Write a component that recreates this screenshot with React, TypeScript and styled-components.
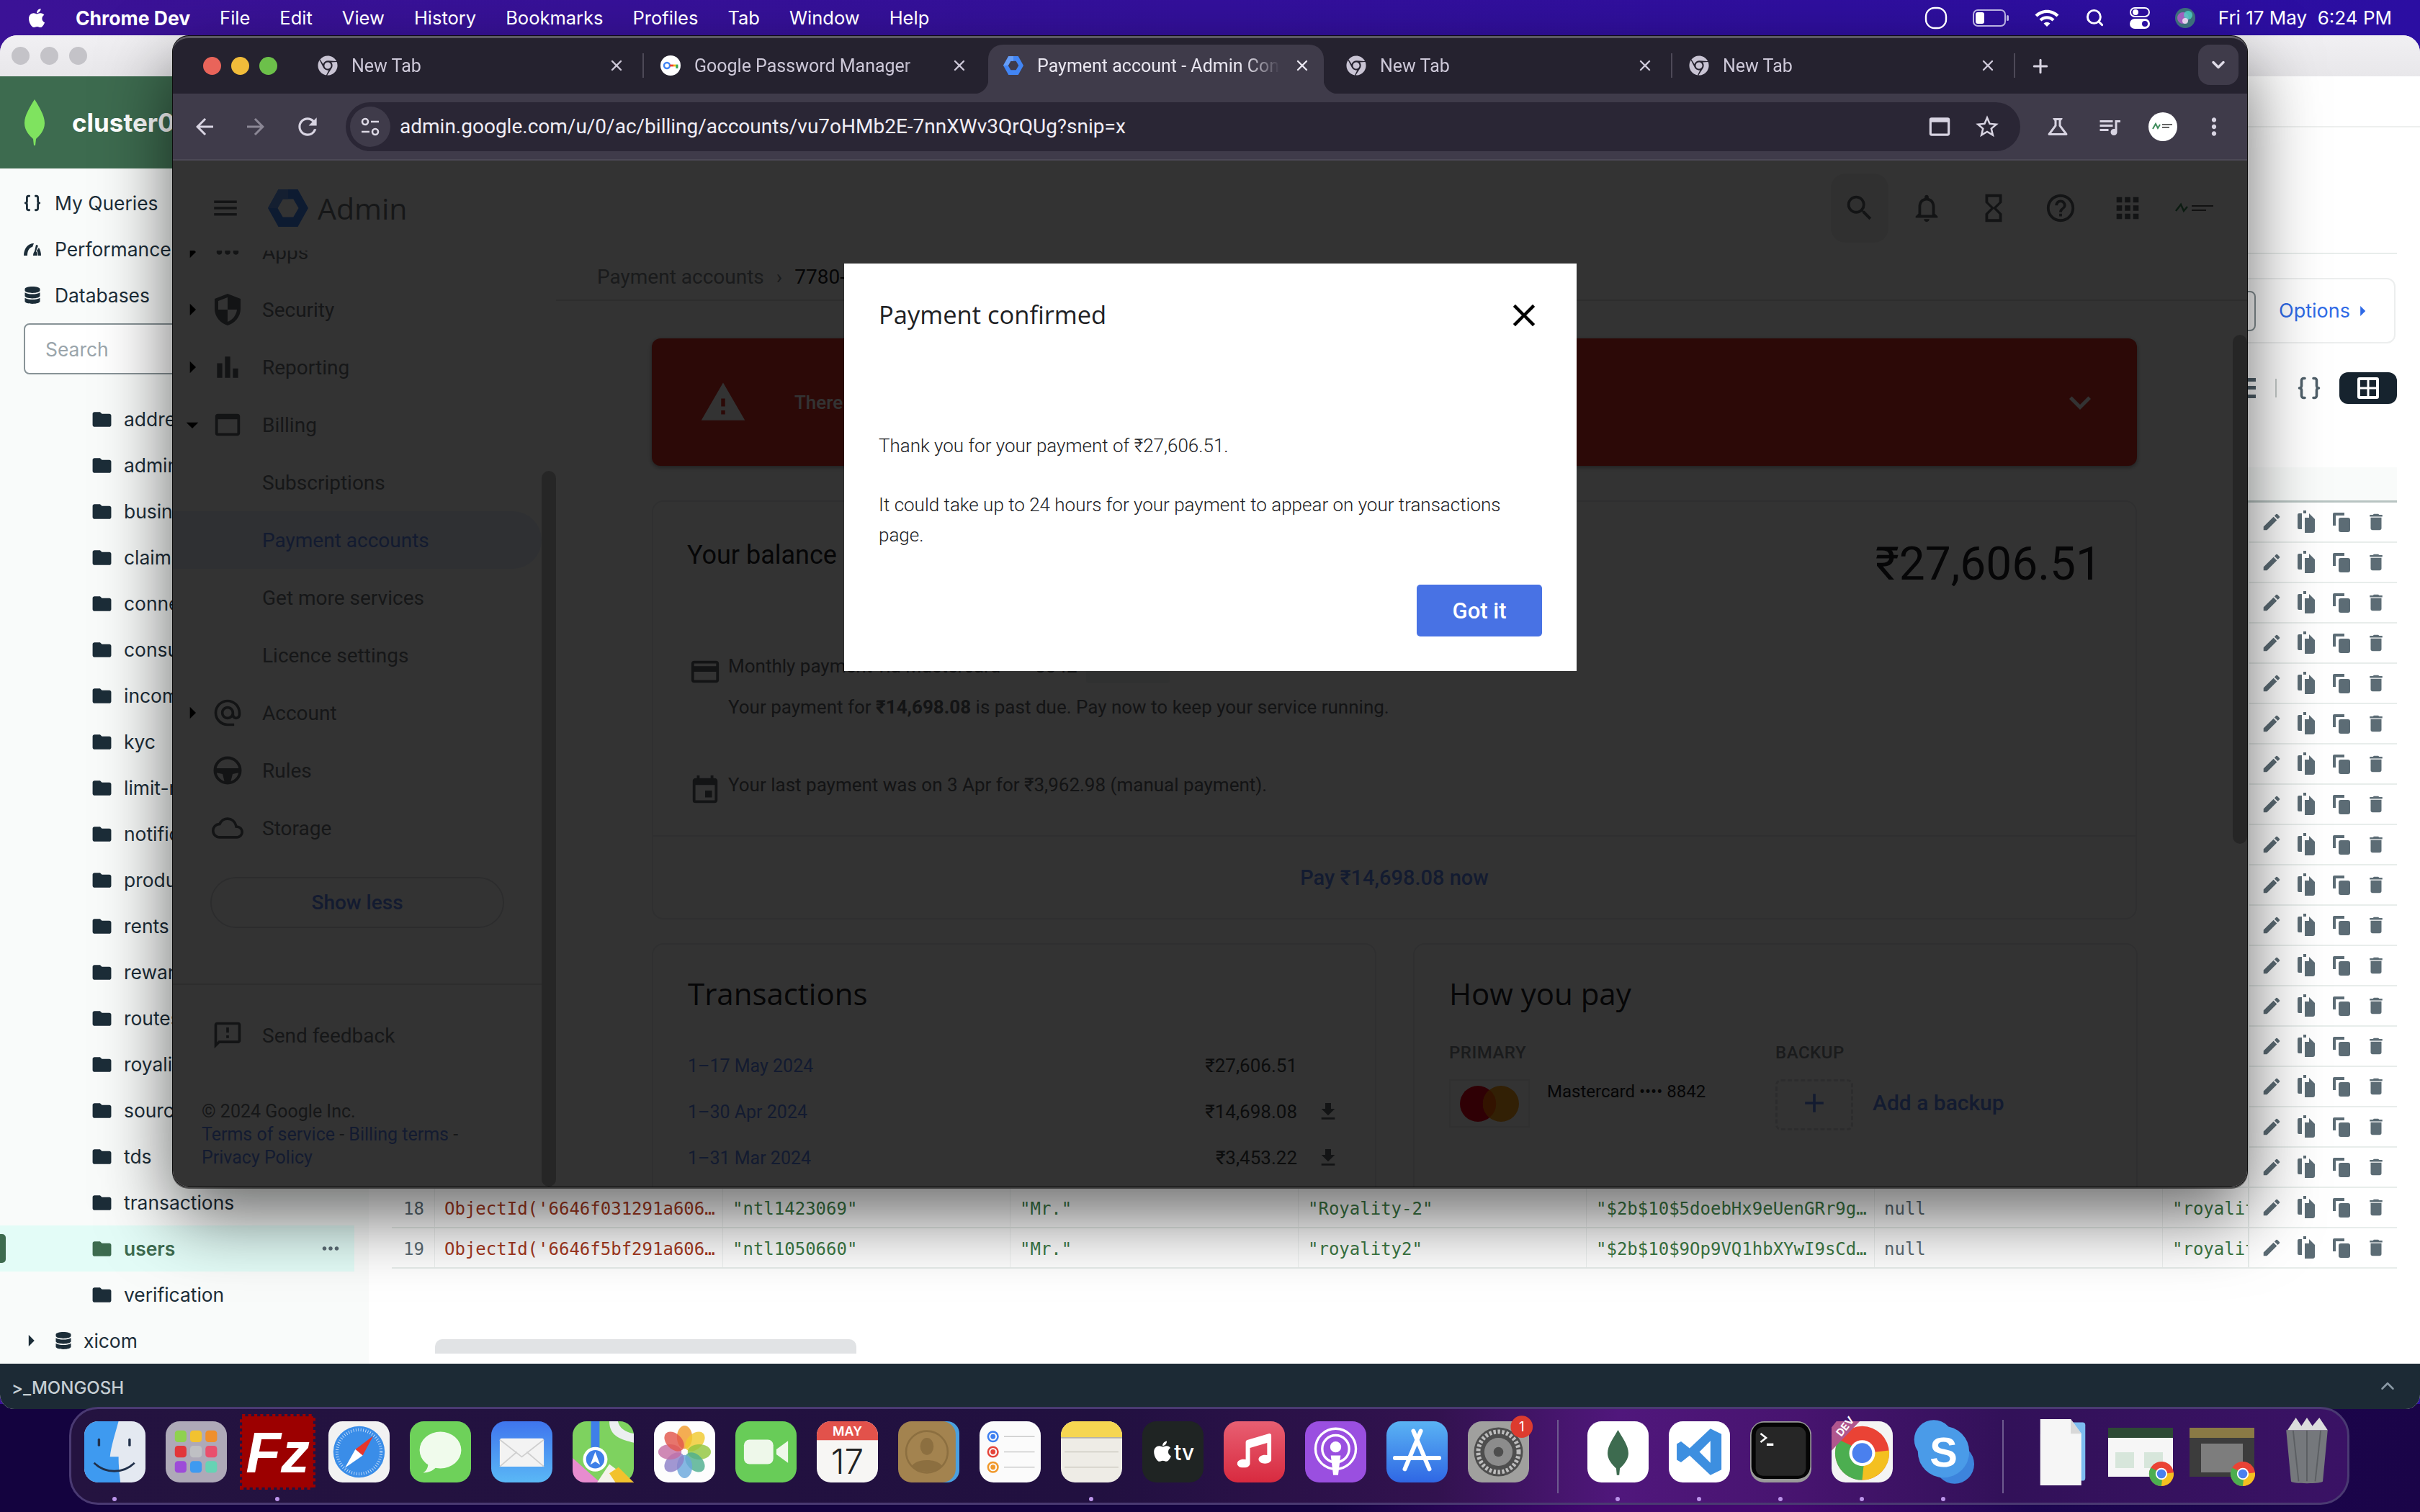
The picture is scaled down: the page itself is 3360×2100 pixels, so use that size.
import React from 'react';
import styled, { createGlobalStyle } from 'styled-components';
import { Braces, Search, ChevronDown, Plus, X, ChevronUp } from 'lucide-react';
import { FaApple, FaChrome, FaDatabase, FaMusic } from 'react-icons/fa';
import {
  MdAdd, MdAlternateEmail, MdApps, MdArrowBack, MdArrowDropDown, MdArrowForward, MdBarChart, MdClose,
  MdCreditCard, MdDelete, MdEdit, MdEvent, MdFileDownload, MdFolder, MdHelpOutline, MdHourglassEmpty,
  MdMenu, MdMoreHoriz, MdMoreVert, MdNotificationsNone, MdOutlineCloud, MdOutlineFeedback, MdOutlineQueueMusic,
  MdOutlineScience, MdRefresh, MdSearch, MdStarBorder, MdWarning, MdWifi, MdArrowRight, MdExpandMore,
  MdWebAsset,
} from 'react-icons/md';

const GlobalStyle = createGlobalStyle`
  html, body { margin: 0; padding: 0; background: #14033f; }
  * { box-sizing: border-box; }
`;

const Desktop = styled.div`
  position: relative;
  width: 3360px;
  height: 2100px;
  overflow: hidden;
  font-family: Inter, "Liberation Sans", sans-serif;
  background: linear-gradient(90deg, #3b1296 0%, #2b0ea2 100%);
`;

const Wallpaper = styled.div`
  position: absolute;
  left: 0;
  right: 0;
  top: 1950px;
  bottom: 0;
  background: linear-gradient(90deg, #14033f 0%, #14033f 55%, #42086f 66%, #44086f 74%, #1d0650 84%, #1a0448 100%);
`;

/* ---------- menu bar ---------- */

const MenuBar = styled.div`
  position: relative;
  z-index: 5;
  height: 49px;
  display: flex;
  align-items: center;
  padding: 0 39px 0 36px;
  color: #fff;
  font-size: 25.5px;
`;

const AppleMark = styled.span`
  display: flex;
  margin-right: 39px;
`;

const MenuList = styled.div`
  display: flex;
  gap: 41px;
`;

const MenuItem = styled.span<{ $bold?: boolean }>`
  font-weight: ${(p) => (p.$bold ? 700 : 400)};
  font-size: ${(p) => (p.$bold ? '26.5px' : 'inherit')};
`;

const StatusArea = styled.div`
  margin-left: auto;
  display: flex;
  align-items: center;
  gap: 35px;
`;

const StatusTime = styled.span`
  margin-left: -3px;
  white-space: pre;
  font-size: 26px;
`;

/* ---------- compass (window behind) ---------- */

const CompassWindow = styled.div`
  position: relative;
  height: 1908px;
  display: flex;
  flex-direction: column;
  border-radius: 24px 24px 20px 20px;
  overflow: hidden;
  background: #fff;
`;

const CompassTitle = styled.div`
  height: 57px;
  flex: none;
  display: flex;
  align-items: center;
  gap: 15px;
  padding-left: 16px;
  background: linear-gradient(#f1f0f3, #e8e7ea);
`;

const GreyLight = styled.span`
  width: 25px;
  height: 25px;
  border-radius: 50%;
  background: #c4c3c8;
`;

const CompassBody = styled.div`
  flex: 1;
  display: flex;
  min-height: 0;
`;

const CompassSidebar = styled.div`
  width: 512px;
  flex: none;
  background: #f9fbfa;
  color: #1c2d38;
  font-size: 26.4px;
`;

const ClusterHeader = styled.div`
  height: 128px;
  display: flex;
  align-items: center;
  gap: 36px;
  padding-left: 32px;
  background: #3d6b4f;
  color: #fff;
  font-size: 35px;
  font-weight: 700;
`;

const SideNav = styled.div`
  padding-top: 16px;
`;

const SideLink = styled.div`
  height: 64px;
  display: flex;
  align-items: center;
  gap: 18px;
  padding-left: 32px;
`;

const SideIcon = styled.span`
  width: 26px;
  display: flex;
  justify-content: center;
`;

const SearchBox = styled.div`
  margin: 7px 0 30px 33px;
  width: 400px;
  height: 71px;
  display: flex;
  align-items: center;
  padding-left: 28px;
  border: 2px solid #889397;
  border-radius: 8px;
  background: #fff;
  color: #9aa5ab;
`;

const CollectionRow = styled.div<{ $active?: boolean }>`
  position: relative;
  width: 492px;
  height: 64px;
  display: flex;
  align-items: center;
  gap: 15px;
  padding-left: 126px;
  color: ${(p) => (p.$active ? '#3d6b4f' : '#1c2d38')};
  font-weight: ${(p) => (p.$active ? 600 : 400)};
  background: ${(p) => (p.$active ? '#e3fcf7' : 'transparent')};
`;

const ActiveMarker = styled.span`
  position: absolute;
  left: 0;
  top: 12px;
  width: 8px;
  height: 40px;
  border-radius: 0 5px 5px 0;
  background: #3d6b4f;
`;

const RowDots = styled.span`
  margin-left: auto;
  margin-right: 16px;
  display: flex;
  color: #5c6c75;
`;

const DatabaseRow = styled.div`
  height: 64px;
  display: flex;
  align-items: center;
  padding-left: 32px;
  gap: 16px;
`;

const CompassMain = styled.div`
  flex: 1;
  min-width: 0;
  display: flex;
  flex-direction: column;
  padding-right: 32px;
  background: #fff;
`;

const MainTabs = styled.div`
  height: 71px;
  flex: none;
  margin-right: -32px;
  border-bottom: 2px solid #edefee;
`;

const MainHeading = styled.div`
  height: 176px;
  flex: none;
  border-bottom: 2px solid #e8edeb;
`;

const QueryBar = styled.div`
  margin: 33px 2px 0 32px;
  height: 91px;
  flex: none;
  display: flex;
  align-items: center;
  justify-content: flex-end;
  padding-right: 27px;
  border: 2px solid #eceeee;
  border-radius: 12px;
`;

const QueryInput = styled.div`
  flex: 1;
  height: 56px;
  margin-right: 32px;
  border: 2px solid #889397;
  border-radius: 8px;
`;

const OptionsLink = styled.span`
  display: flex;
  align-items: center;
  color: #2f6ae6;
  font-size: 27px;
`;

const ViewBar = styled.div`
  margin-top: 40px;
  height: 44px;
  flex: none;
  display: flex;
  justify-content: flex-end;
  align-items: center;
`;

const ViewDivider = styled.span`
  width: 2px;
  height: 26px;
  margin: 0 27px;
  background: #c6cccb;
`;

const ViewButton = styled.span<{ $active?: boolean }>`
  width: ${(p) => (p.$active ? '80px' : 'auto')};
  height: 44px;
  margin-left: ${(p) => (p.$active ? '24px' : '0')};
  display: flex;
  align-items: center;
  justify-content: center;
  border-radius: 12px;
  color: ${(p) => (p.$active ? '#fff' : '#4f5f69')};
  background: ${(p) => (p.$active ? '#16232e' : 'transparent')};
`;

const TableBlock = styled.div`
  margin: 88px 0 0 32px;
  flex: none;
`;

const TableHead = styled.div`
  height: 49px;
  background: #f9fbfa;
  border-bottom: 3px solid #b8c4c2;
`;

const gridColumns = '59px 400px 399px 400px 400px 400px 400px 119px 207px';

const TableRow = styled.div`
  height: 56px;
  display: grid;
  grid-template-columns: ${gridColumns};
  border-bottom: 2px solid #e8edeb;
  font-family: "DejaVu Sans Mono", monospace;
  font-size: 24px;
`;

const Cell = styled.div<{ $tone?: string }>`
  padding: 3px 0 0 13px;
  display: flex;
  align-items: center;
  white-space: nowrap;
  overflow: hidden;
  border-left: 1px solid #eef1f0;
  color: ${(p) => p.$tone || '#5c6c75'};
`;

const NumberCell = styled.div`
  padding: 3px 0 0 16px;
  display: flex;
  align-items: center;
  color: #5c6c75;
`;

const ActionCell = styled.div`
  display: flex;
  align-items: center;
  gap: 19px;
  padding-left: 16px;
  color: #5c6c75;
  border-left: 2px solid #e8edeb;
  background: #fff;
`;

const HorizontalBar = styled.div`
  margin: auto 0 14px 92px;
  width: 585px;
  height: 20px;
  flex: none;
  border-radius: 10px 10px 0 0;
  background: #e1e3e5;
`;

const ShellBar = styled.div`
  height: 63px;
  flex: none;
  display: flex;
  align-items: center;
  justify-content: space-between;
  padding: 0 30px 2px 16px;
  background: #1c2a35;
  color: #c5ced3;
  font-size: 24px;
  font-weight: 500;
`;

const ShellLabel = styled.span`
  margin-top: 5px;
`;

/* ---------- chrome window (floats above compass) ---------- */

const ChromeWindow = styled.div`
  position: absolute;
  left: 240px;
  top: 50px;
  width: 2880px;
  height: 1598px;
  z-index: 2;
  display: flex;
  flex-direction: column;
  border-radius: 22px;
  background: #25222f;
  box-shadow: 0 40px 100px rgba(0, 0, 0, 0.6), 0 0 0 1px #111, 0 2px 0 1px #777;
`;

const ChromeClip = styled.div`
  position: relative;
  flex: 1;
  display: flex;
  flex-direction: column;
  min-height: 0;
  border-radius: 22px;
  overflow: hidden;
  border-top: 3px solid #5c5a63;
`;

const TabStrip = styled.div`
  height: 77px;
  flex: none;
  display: flex;
  align-items: flex-end;
  padding-left: 42px;
`;

const Lights = styled.div`
  align-self: center;
  display: flex;
  gap: 14px;
  margin-right: 35px;
`;

const Light = styled.span<{ $c: string }>`
  width: 25px;
  height: 25px;
  border-radius: 50%;
  background: ${(p) => p.$c};
`;

const Tab = styled.div<{ $active?: boolean; $divider?: boolean }>`
  position: relative;
  width: 466px;
  height: 68px;
  margin-right: 10px;
  display: flex;
  align-items: center;
  padding: 0 18px 10px 21px;
  border-radius: 20px 20px 0 0;
  color: ${(p) => (p.$active ? '#e9e6f0' : '#cdc8d8')};
  background: ${(p) => (p.$active ? '#3f3b4a' : 'transparent')};
  font-family: Roboto, sans-serif;
  font-size: 25px;

  &::before {
    content: '';
    display: ${(p) => (p.$active ? 'block' : 'none')};
    position: absolute;
    left: -20px;
    bottom: 0;
    width: 20px;
    height: 20px;
    background: radial-gradient(circle at 0 0, transparent 20px, #3f3b4a 21px);
  }

  &::after {
    content: '';
    display: ${(p) => (p.$divider || p.$active ? 'block' : 'none')};
    position: absolute;
    right: ${(p) => (p.$active ? '-20px' : '-8px')};
    top: ${(p) => (p.$active ? 'auto' : '12px')};
    bottom: ${(p) => (p.$active ? '0' : 'auto')};
    width: ${(p) => (p.$active ? '20px' : '2px')};
    height: ${(p) => (p.$active ? '20px' : '34px')};
    background: ${(p) => (p.$active ? 'radial-gradient(circle at 100% 0, transparent 20px, #3f3b4a 21px)' : '#4d4957')};
  }
`;

const TabFavicon = styled.span`
  width: 28px;
  height: 28px;
  flex: none;
  display: flex;
  margin-right: 19px;
`;

const TabLabel = styled.span`
  flex: 1;
  white-space: nowrap;
  overflow: hidden;
  -webkit-mask-image: linear-gradient(90deg, #000 84%, transparent 98%);
`;

const NewTabButton = styled.span`
  align-self: center;
  margin: 0 0 0 18px;
  display: flex;
  color: #d8d4e2;
`;

const TabMenuButton = styled.span`
  margin: 0 12px 12px auto;
  width: 56px;
  height: 56px;
  display: flex;
  align-items: center;
  justify-content: center;
  border-radius: 16px;
  background: #3f3b4a;
  color: #e0dce8;
`;

const Toolbar = styled.div`
  height: 93px;
  flex: none;
  display: flex;
  align-items: center;
  padding: 0 27px 0 26px;
  background: #3f3b4a;
  border-bottom: 2px solid #4c4956;
`;

const NavIcon = styled.span<{ $dim?: boolean }>`
  display: flex;
  margin-right: 35px;
  color: ${(p) => (p.$dim ? '#8b8795' : '#d8d4e2')};
`;

const Omnibox = styled.div`
  width: 2340px;
  height: 68px;
  margin-left: -1px;
  display: flex;
  align-items: center;
  padding: 0 27px 0 6px;
  border-radius: 34px;
  background: #2a2635;
  color: #f0edf5;
  font-family: Roboto, sans-serif;
  font-size: 28px;
`;

const SiteInfo = styled.span`
  width: 56px;
  height: 56px;
  flex: none;
  margin-right: 13px;
  display: flex;
  align-items: center;
  justify-content: center;
  border-radius: 50%;
  background: #3f3b4a;
  color: #dcd8e4;
`;

const OmniActions = styled.span`
  margin-left: auto;
  display: flex;
  align-items: center;
  gap: 28px;
  color: #d8d4e2;
`;

const ToolActions = styled.div`
  margin-left: 34px;
  display: flex;
  align-items: center;
  gap: 36px;
  color: #d8d4e2;
`;

const AvatarDot = styled.span`
  width: 40px;
  height: 40px;
  margin-right: -4px;
  display: flex;
  align-items: center;
  justify-content: center;
  border-radius: 50%;
  background: #fff;
`;

const PageArea = styled.div`
  position: relative;
  flex: 1;
  min-height: 0;
  display: flex;
  flex-direction: column;
  background: #fff;
  overflow: hidden;
  color: #202124;
  font-family: Roboto, sans-serif;
`;

const AdminHeader = styled.div`
  height: 125px;
  flex: none;
  display: flex;
  align-items: center;
  padding: 6px 33px 0 52px;
  color: #5f6368;
`;

const HeaderIcon = styled.span<{ $lit?: boolean }>`
  width: 80px;
  height: 96px;
  margin-left: 13px;
  display: flex;
  align-items: center;
  justify-content: center;
  border-radius: 20px;
  color: #5f6368;
  background: ${(p) => (p.$lit ? '#f1f1f1' : 'transparent')};
`;

const LogoSlot = styled.span`
  display: flex;
  margin-left: 38px;
`;

const AdminWordmark = styled.span`
  margin-left: 13px;
  font-family: "Open Sans", Roboto, sans-serif;
  font-size: 41px;
  color: #6f7378;
`;

const HeaderRight = styled.div`
  margin-left: auto;
  display: flex;
  align-items: center;
`;

const PageBody = styled.div`
  flex: 1;
  min-height: 0;
  display: flex;
`;

const AdminNav = styled.div`
  width: 512px;
  flex: none;
  overflow: hidden;
`;

const NavList = styled.div`
  margin-top: -38px;
`;

const NavRow = styled.div<{ $active?: boolean }>`
  height: 80px;
  display: flex;
  align-items: center;
  padding-left: 20px;
  border-radius: 0 40px 40px 0;
  font-size: 28px;
  color: ${(p) => (p.$active ? '#5f86f0' : '#6f7378')};
  background: ${(p) => (p.$active ? '#e8f0fe' : 'transparent')};
`;

const NavArrow = styled.span`
  width: 14px;
  margin-right: 14px;
  display: flex;
  justify-content: center;
  color: #000;
`;

const NavGlyph = styled.span`
  width: 56px;
  margin-right: 20px;
  display: flex;
  justify-content: center;
  color: #5f6368;
`;

const ShowLess = styled.div`
  margin: 28px 0 0 52px;
  width: 408px;
  height: 71px;
  display: flex;
  align-items: center;
  justify-content: center;
  border: 2px solid #dadce0;
  border-radius: 36px;
  color: #5f86f0;
  font-size: 28px;
  font-weight: 500;
`;

const NavRule = styled.div`
  margin-top: 77px;
  height: 2px;
  background: #e0e0e0;
`;

const FeedbackRow = styled.div`
  height: 140px;
  display: flex;
  align-items: center;
  padding: 0 0 0 48px;
  color: #6f7378;
  font-size: 28px;
`;

const LegalText = styled.div`
  margin: 20px 0 0 40px;
  line-height: 32px;
  font-size: 25px;
  color: #6f7378;
`;

const LinkText = styled.span`
  color: #5f86f0;
`;

const ScrollThumb = styled.div<{ $top: number; $height?: number }>`
  width: 20px;
  flex: none;
  margin-top: ${(p) => p.$top}px;
  height: ${(p) => (p.$height ? `${p.$height}px` : 'auto')};
  border-radius: 10px;
  background: #bdbdbd;
`;

const MainColumn = styled.div`
  flex: 1;
  min-width: 0;
  display: flex;
  flex-direction: column;
`;

const Breadcrumb = styled.div`
  height: 70px;
  flex: none;
  display: flex;
  align-items: flex-start;
  gap: 17px;
  padding: 20px 0 0 57px;
  border-bottom: 2px solid #e0e0e0;
  font-size: 28px;
  color: #80868b;
`;

const CrumbCurrent = styled.span`
  color: #202124;
`;

const ContentRow = styled.div`
  flex: 1;
  min-height: 0;
  display: flex;
`;

const Content = styled.div`
  flex: 1;
  min-width: 0;
  padding: 52px 133px 0;
`;

const AlertBar = styled.div`
  height: 177px;
  display: flex;
  align-items: center;
  padding: 0 49px 0 66px;
  border-radius: 12px;
  background: #d93025;
  color: #fff;
  font-size: 26px;
  box-shadow: 0 2px 6px rgba(0, 0, 0, 0.4);
`;

const AlertText = styled.span`
  margin-left: 66px;
  font-weight: 500;
  color: #fff;
`;

const AlertChevron = styled.span`
  margin-left: auto;
  display: flex;
  color: #fff;
`;

const Card = styled.div`
  border: 2px solid #e8eaed;
  border-radius: 16px;
`;

const BalanceCard = styled(Card)`
  margin-top: 48px;
  height: 582px;
  display: flex;
  flex-direction: column;
`;

const BalanceTop = styled.div`
  height: 213px;
  flex: none;
  display: flex;
  justify-content: space-between;
  padding: 53px 47px 0 47px;
  font-size: 36px;
`;

const BalanceAmount = styled.span`
  font-size: 64px;
  line-height: 92px;
  margin-top: -12px;
`;

const InfoRow = styled.div<{ $gap?: number }>`
  display: flex;
  align-items: flex-start;
  margin-top: ${(p) => p.$gap || 0}px;
  padding-left: 56px;
  font-size: 26px;
`;

const InfoIcon = styled.span`
  width: 48px;
  margin-left: -8px;
  margin-right: 8px;
  flex: none;
  display: flex;
  justify-content: center;
  color: #5f6368;
`;

const InfoLines = styled.div`
  display: flex;
  flex-direction: column;
  gap: 25px;
  line-height: 30px;
  color: #5f6368;
`;

const Chip = styled.span`
  display: inline-block;
  width: 116px;
  height: 44px;
  margin: -7px 0 -7px 12px;
  vertical-align: middle;
  border-radius: 4px;
  background: #f1f3f4;
`;

const PayStrip = styled.div`
  margin-top: auto;
  height: 115px;
  flex: none;
  display: flex;
  align-items: center;
  justify-content: center;
  border-top: 2px solid #e8eaed;
  font-size: 29px;
  font-weight: 500;
  color: #5f86f0;
`;

const CardsRow = styled.div`
  margin-top: 33px;
  display: grid;
  grid-template-columns: 1006px 1006px;
  gap: 51px;
`;

const LowerCard = styled(Card)`
  height: 500px;
  padding: 42px 48px 0;
`;

const CardTitle = styled.div`
  font-family: "Open Sans", Roboto, sans-serif;
  font-size: 42px;
  line-height: 52px;
  color: #202124;
`;

const TxnList = styled.div`
  margin-top: 42px;
`;

const TxnRow = styled.div`
  height: 64px;
  display: flex;
  align-items: center;
  font-size: 25px;
`;

const TxnAmount = styled.span`
  margin-left: auto;
  font-size: 26px;
  color: #3c4043;
`;

const TxnDownload = styled.span`
  width: 32px;
  margin: 0 1px 0 27px;
  display: flex;
  justify-content: center;
  color: #5f6368;
`;

const PayGrid = styled.div`
  margin-top: 41px;
  display: grid;
  grid-template-columns: 453px 1fr;
`;

const PayLabel = styled.div`
  font-size: 24px;
  font-weight: 500;
  letter-spacing: 0.5px;
  line-height: 30px;
  color: #80868b;
`;

const PayMethod = styled.div`
  margin-top: 22px;
  display: flex;
  align-items: flex-start;
  font-size: 24px;
`;

const CardLogo = styled.span`
  width: 112px;
  height: 67px;
  flex: none;
  display: flex;
  align-items: center;
  justify-content: center;
  border: 2px solid #eeeeee;
  margin-right: 24px;
`;

const MethodText = styled.span`
  margin-top: 3px;
`;

const DashedBox = styled.span`
  width: 108px;
  height: 71px;
  flex: none;
  display: flex;
  align-items: center;
  justify-content: center;
  padding-bottom: 5px;
  border: 3px dashed #dadce0;
  border-radius: 8px;
  margin-right: 27px;
  color: #5f86f0;
`;

const AddBackup = styled.span`
  align-self: center;
  margin-bottom: 6px;
  font-size: 30px;
  font-weight: 500;
  color: #5f86f0;
`;

const Scrim = styled.div`
  position: absolute;
  inset: 0;
  background: rgba(0, 0, 0, 0.8);
`;

const Modal = styled.div`
  position: absolute;
  left: 932px;
  top: 143px;
  width: 1017px;
  height: 566px;
  padding: 0 48px 0 48px;
  display: flex;
  flex-direction: column;
  background: #fff;
`;

const ModalHeader = styled.div`
  height: 144px;
  flex: none;
  display: flex;
  align-items: center;
  justify-content: space-between;
`;

const ModalTitle = styled.div`
  margin-top: -3px;
  font-family: "Open Sans", Roboto, sans-serif;
  font-size: 34.5px;
  color: #202124;
`;

const ModalClose = styled.span`
  display: flex;
  margin-right: -1px;
  color: #000;
`;

const ModalText = styled.p`
  margin: 0;
  font-size: 26px;
  line-height: 42px;
  font-weight: 300;
  color: #202124;
`;

const ModalBody = styled.div`
  margin-top: 88px;
  display: flex;
  flex-direction: column;
  gap: 40px;
`;

const ModalFooter = styled.div`
  margin-top: 48px;
  display: flex;
  justify-content: flex-end;
`;

const PrimaryButton = styled.button`
  width: 174px;
  height: 72px;
  border: 0;
  border-radius: 5px;
  background: #4872e4;
  color: #fff;
  font-family: Roboto, sans-serif;
  font-size: 31px;
  font-weight: 500;
`;

/* ---------- dock ---------- */

const Dock = styled.div`
  position: absolute;
  left: 96px;
  top: 1954px;
  width: 3166px;
  height: 136px;
  z-index: 3;
  display: flex;
  padding: 17px 0 0 3.5px;
  border: 3px solid #4a3a72;
  border-radius: 40px;
  background: linear-gradient(90deg, #241340 0%, #211040 45%, #32124f 60%, #50177c 68%, #47146f 76%, #321159 85%, #3a1265 100%);
`;

const DockSlot = styled.div`
  width: 113px;
  flex: none;
  display: flex;
  flex-direction: column;
  align-items: center;
`;

const DockArt = styled.div`
  width: 85px;
  height: 85px;
  display: flex;
  align-items: center;
  justify-content: center;
`;

const RunDot = styled.span<{ $on?: boolean }>`
  width: 6px;
  height: 6px;
  margin-top: 20px;
  border-radius: 50%;
  background: ${(p) => (p.$on ? '#bb94ea' : 'transparent')};
`;

const DockGap = styled.div`
  width: 53px;
  flex: none;
  display: flex;
  justify-content: center;
  height: 102px;
  margin-top: -2px;

  &::before {
    content: '';
    width: 2px;
    background: #6d5a8e;
  }
`;

/* ---------- small drawings ---------- */

const Leaf = ({ size = 64, fill = '#7fe35f' }: { size?: number; fill?: string }) => (
  <svg width={size * 0.5} height={size} viewBox="0 0 32 64">
    <path d="M16 0C22 10 30 22 30 33c0 11-8 18-12 22l-1 9h-2l-1-9C10 51 2 44 2 33 2 22 10 10 16 0z" fill={fill} />
  </svg>
);

const Gauge = () => (
  <svg width="26" height="20" viewBox="0 0 26 20">
    <path d="M1 19C1 9 7 2 15 2l-2 5C8 8 6 13 6 19zM18 4l3 1-3 8c2 2 2 4 2 6h-6c0-3 1-5 2-6z" fill="#1c2d38" />
    <path d="M22 8c2 3 3 7 3 11h-4c0-3-1-5-2-7z" fill="#1c2d38" />
  </svg>
);

const HexLogo = ({ size = 54 }: { size?: number }) => (
  <svg width={size} height={size} viewBox="0 0 54 54">
    <path fillRule="evenodd" d="M14 2h26l14 25-14 25H14L0 27zM20 15l-7 12 7 12h14l7-12-7-12z" fill="#4285f4" />
    <path d="M0 27L14 2h13v13h-7l-7 12z" fill="#669df6" />
  </svg>
);

const KeyIcon = () => (
  <svg width="28" height="28" viewBox="0 0 28 28">
    <circle cx="14" cy="14" r="14" fill="#fff" />
    <circle cx="9" cy="14" r="4" fill="none" stroke="#4285f4" strokeWidth="2.4" />
    <rect x="13" y="12.6" width="5" height="2.8" fill="#ea4335" />
    <rect x="18" y="12.6" width="3.4" height="2.8" fill="#fbbc04" />
    <rect x="21.4" y="12.6" width="3" height="2.8" fill="#34a853" />
    <rect x="21.4" y="15" width="3" height="3" fill="#34a853" />
  </svg>
);

const SiteTune = () => (
  <svg width="30" height="30" viewBox="0 0 30 30" fill="none" stroke="currentColor" strokeWidth="2.6">
    <circle cx="8" cy="8" r="4" />
    <path d="M16 8h11M3 22h11" />
    <circle cx="22" cy="22" r="4" />
  </svg>
);

const CopyDoc = () => (
  <svg width="30" height="32" viewBox="0 0 30 32" fill="currentColor">
    <path d="M10 0h4v4h-4zM2 6a2 2 0 012-2h4v22H4a2 2 0 01-2-2z" />
    <path d="M12 10h6V4l8 8v16a3 3 0 01-3 3H12z" />
  </svg>
);

const CloneDoc = () => (
  <svg width="28" height="30" viewBox="0 0 28 30" fill="currentColor">
    <path d="M2 4a2 2 0 012-2h14v4H6v14H2z" />
    <rect x="10" y="9" width="16" height="20" rx="3" />
  </svg>
);

const ListGlyph = () => (
  <svg width="40" height="30" viewBox="0 0 40 30" fill="currentColor">
    <rect x="0" y="1" width="40" height="5" />
    <rect x="0" y="12" width="40" height="5" />
    <rect x="0" y="24" width="40" height="5" />
  </svg>
);

const GridGlyph = () => (
  <svg width="30" height="30" viewBox="0 0 30 30">
    <rect width="30" height="30" rx="3" fill="#fff" />
    <rect x="4" y="4" width="9.5" height="9.5" fill="#16232e" />
    <rect x="16.5" y="4" width="9.5" height="9.5" fill="#16232e" />
    <rect x="4" y="16.5" width="9.5" height="9.5" fill="#16232e" />
    <rect x="16.5" y="16.5" width="9.5" height="9.5" fill="#16232e" />
  </svg>
);

const ShieldIcon = () => (
  <svg width="40" height="46" viewBox="0 0 40 46">
    <path d="M20 1L2 8v14c0 11 8 20 18 23 10-3 18-12 18-23V8z" fill="#5f6368" />
    <path d="M20 6v17H7V11zM20 23h13c-1 8-6 14-13 17z" fill="#fff" />
  </svg>
);

const RulesIcon = () => (
  <svg width="40" height="40" viewBox="0 0 40 40">
    <circle cx="20" cy="20" r="17.5" fill="none" stroke="#5f6368" strokeWidth="4" />
    <path d="M3 17h34v6l-10 2-3 12h-8l-3-12-10-2z" fill="#5f6368" />
  </svg>
);

const Squircle = ({ fill }: { fill: string }) => <rect width="100" height="100" rx="23" fill={fill} />;

const Art = ({ children, size = 85 }: { children: React.ReactNode; size?: number }) => (
  <svg width={size} height={size} viewBox="0 0 100 100" style={{ overflow: 'visible', flex: 'none' }}>
    {children}
  </svg>
);

const ChromeBall = ({ cx, cy, r }: { cx: number; cy: number; r: number }) => (
  <g>
    <circle cx={cx} cy={cy} r={r} fill="#ea4335" />
    <path d={`M${cx - r * 0.87} ${cy - r * 0.5}A${r} ${r} 0 0 0 ${cx} ${cy + r}L${cx + r * 0.4} ${cy + r * 0.1}z`} fill="#4cae50" />
    <path d={`M${cx + r} ${cy - r * 0.1}A${r} ${r} 0 0 1 ${cx} ${cy + r}L${cx + r * 0.1} ${cy}z`} fill="#f4c020" />
    <circle cx={cx} cy={cy} r={r * 0.48} fill="#fff" />
    <circle cx={cx} cy={cy} r={r * 0.37} fill="#4a80ee" />
  </g>
);

const dockIcons: Record<string, React.ReactNode> = {
  finder: (
    <Art>
      <Squircle fill="#e4e9f1" />
      <path d="M23 0h33C50 22 44 40 42 58h14c0 14 1 28 3 42H23A23 23 0 010 77V23A23 23 0 0123 0z" fill="#3e9af0" />
      <rect x="22" y="28" width="4" height="13" rx="2" fill="#20304a" />
      <rect x="72" y="28" width="4" height="13" rx="2" fill="#20304a" />
      <path d="M16 68c18 18 48 18 66 0" stroke="#20304a" strokeWidth="3.4" fill="none" />
    </Art>
  ),
  launchpad: (
    <Art>
      <Squircle fill="#aea9b8" />
      {['#8fd14f', '#f2c230', '#ef8f2d', '#e2363a', '#bfc0c4', '#e94f6d', '#9d4bd8', '#3f9af0', '#66d3b4'].map((c, i) => (
        <rect key={c} x={15 + (i % 3) * 25} y={15 + Math.floor(i / 3) * 25} width="19" height="19" rx="5" fill={c} />
      ))}
    </Art>
  ),
  filezilla: (
    <Art size={105}>
      <rect x="3" y="3" width="94" height="94" fill="#9c0000" stroke="#9c0000" strokeWidth="6" strokeDasharray="4 4" />
      <text x="50" y="77" textAnchor="middle" fontFamily="'Liberation Sans', sans-serif" fontWeight="700" fontStyle="italic" fontSize="76" fill="#fff">Fz</text>
    </Art>
  ),
  safari: (
    <Art>
      <Squircle fill="#f2f2f2" />
      <circle cx="50" cy="50" r="42" fill="#3a8de8" />
      <circle cx="50" cy="50" r="36" fill="none" stroke="#cfe3fa" strokeWidth="5" strokeDasharray="1 3" />
      <path d="M73 24L44 46l12 10z" fill="#e8352b" />
      <path d="M27 76l29-20-12-10z" fill="#fff" />
    </Art>
  ),
  messages: (
    <Art>
      <Squircle fill="#6ed15a" />
      <ellipse cx="50" cy="47" rx="34" ry="30" fill="#f0fbec" />
      <path d="M30 68c0 8-3 13-8 16 8 0 16-3 21-9z" fill="#f0fbec" />
    </Art>
  ),
  mail: (
    <Art>
      <rect width="100" height="100" rx="23" fill="url(#mailg)" />
      <defs>
        <linearGradient id="mailg" x1="0" y1="0" x2="0" y2="1">
          <stop offset="0" stopColor="#3f75ee" />
          <stop offset="1" stopColor="#5ab8f6" />
        </linearGradient>
      </defs>
      <rect x="14" y="28" width="72" height="46" rx="3" fill="#f3f3f3" />
      <path d="M14 30l36 28 36-28M14 74l28-24M86 74L58 50" fill="none" stroke="#cfcfcf" strokeWidth="2" />
    </Art>
  ),
  maps: (
    <Art>
      <Squircle fill="#7ed25f" />
      <path d="M0 60l45 40H20A20 20 0 010 80z" fill="#e78ccf" />
      <path d="M40 100l20-30 40 30z" fill="#f5f3ea" />
      <path d="M70 100l-10-15 15-10 25 25z" fill="#f2c22d" />
      <path d="M30 0h14v50H30z" fill="#3f7fe8" />
      <path d="M60 0c0 25 20 30 40 35V20C85 18 76 10 74 0z" fill="#eceff0" />
      <circle cx="37" cy="62" r="20" fill="#fff" />
      <circle cx="37" cy="62" r="15" fill="#3f7fe8" />
      <path d="M37 50l8 21-8-5-8 5z" fill="#fff" />
    </Art>
  ),
  photos: (
    <Art>
      <Squircle fill="#fdfdfd" />
      {['#f29b2c', '#f0c92e', '#93c63e', '#4fae8f', '#6aa7dc', '#8c80c8', '#c46fa5', '#e2574c'].map((c, i) => (
        <ellipse key={c} cx="50" cy="26" rx="12.5" ry="19" fill={c} opacity="0.82" transform={`rotate(${i * 45} 50 50)`} />
      ))}
    </Art>
  ),
  facetime: (
    <Art>
      <Squircle fill="#68cc58" />
      <rect x="14" y="30" width="48" height="40" rx="9" fill="#eef8ea" />
      <path d="M67 46l19-14v36L67 54z" fill="#eef8ea" />
    </Art>
  ),
  calendar: (
    <Art>
      <Squircle fill="#f7f6f4" />
      <path d="M23 0h54a23 23 0 0123 23v8H0v-8A23 23 0 0123 0z" fill="#e2524b" />
      <text x="50" y="24" textAnchor="middle" fontFamily="Inter, sans-serif" fontWeight="600" fontSize="21" fill="#fff">MAY</text>
      <text x="50" y="86" textAnchor="middle" fontFamily="Inter, sans-serif" fontWeight="300" fontSize="56" fill="#222">17</text>
    </Art>
  ),
  contacts: (
    <Art>
      <rect x="6" width="94" height="100" rx="20" fill="#4aa0e0" />
      <rect width="94" height="100" rx="22" fill="#a3834f" />
      <circle cx="47" cy="50" r="34" fill="none" stroke="#8c6f40" strokeWidth="3" />
      <ellipse cx="47" cy="41" rx="11" ry="14" fill="#8c6f40" />
      <path d="M22 74c6-14 44-14 50 0-12 11-38 11-50 0z" fill="#8c6f40" />
    </Art>
  ),
  reminders: (
    <Art>
      <Squircle fill="#fbfbfb" />
      <circle cx="22" cy="25" r="8" fill="none" stroke="#3d7ff0" strokeWidth="3" />
      <circle cx="22" cy="25" r="4" fill="#3d7ff0" />
      <circle cx="22" cy="50" r="8" fill="none" stroke="#e5443a" strokeWidth="3" />
      <circle cx="22" cy="50" r="4" fill="#e5443a" />
      <circle cx="22" cy="75" r="8" fill="none" stroke="#f0982a" strokeWidth="3" />
      <circle cx="22" cy="75" r="4" fill="#f0982a" />
      <path d="M40 25h50M40 50h50M40 75h50" stroke="#ccc" strokeWidth="2" />
    </Art>
  ),
  notes: (
    <Art>
      <Squircle fill="#eeece6" />
      <path d="M23 0h54a23 23 0 0123 23v4H0v-4A23 23 0 0123 0z" fill="#f6d651" />
      <path d="M0 27h100" stroke="#b5b2a8" strokeWidth="2" />
      <path d="M6 50h88M6 75h88" stroke="#cfccc3" strokeWidth="1.6" />
    </Art>
  ),
  tv: (
    <Art>
      <Squircle fill="#1f2423" />
      <FaApple x="14" y="30" size="38" color="#fff" />
      <text x="52" y="63" fontFamily="Inter, sans-serif" fontWeight="500" fontSize="35" fill="#fff">tv</text>
    </Art>
  ),
  music: (
    <Art>
      <rect width="100" height="100" rx="23" fill="url(#musg)" />
      <defs>
        <linearGradient id="musg" x1="0" y1="0" x2="0" y2="1">
          <stop offset="0" stopColor="#e85f72" />
          <stop offset="1" stopColor="#d82a3f" />
        </linearGradient>
      </defs>
      <FaMusic x="22" y="20" size="56" color="#fff" />
    </Art>
  ),
  podcasts: (
    <Art>
      <rect width="100" height="100" rx="23" fill="#9a4fe0" />
      <circle cx="50" cy="45" r="33" fill="none" stroke="#fff" strokeWidth="4" />
      <circle cx="50" cy="45" r="22" fill="none" stroke="#fff" strokeWidth="4" />
      <circle cx="50" cy="42" r="9" fill="#fff" />
      <path d="M42 56h16l-4 32h-8z" fill="#fff" />
    </Art>
  ),
  appstore: (
    <Art>
      <rect width="100" height="100" rx="23" fill="url(#asg)" />
      <defs>
        <linearGradient id="asg" x1="0" y1="0" x2="0" y2="1">
          <stop offset="0" stopColor="#5ab3f4" />
          <stop offset="1" stopColor="#2f67e4" />
        </linearGradient>
      </defs>
      <path d="M56 16L30 78M44 16l26 62M14 60h72" stroke="#fff" strokeWidth="7" strokeLinecap="round" />
    </Art>
  ),
  settings: (
    <Art>
      <Squircle fill="#a0a09e" />
      <circle cx="50" cy="50" r="40" fill="#4e4e4e" />
      <circle cx="50" cy="50" r="33" fill="none" stroke="#bdbdbd" strokeWidth="7" strokeDasharray="4 3" />
      <circle cx="50" cy="50" r="23" fill="#8c8c8c" />
      <circle cx="50" cy="50" r="8" fill="#4e4e4e" />
      <circle cx="88" cy="9" r="18" fill="#dd3b2f" />
      <text x="88" y="17" textAnchor="middle" fontFamily="Inter, sans-serif" fontSize="22" fill="#fff">1</text>
    </Art>
  ),
  mongo: (
    <Art>
      <Squircle fill="#fff" />
      <path d="M50 14c8 14 17 26 17 38 0 12-9 20-14 25l-1 11h-4l-1-11c-5-5-14-13-14-25 0-12 9-24 17-38z" fill="#3d6b4f" />
    </Art>
  ),
  vscode: (
    <Art>
      <Squircle fill="#fff" />
      <path d="M68 12l18 9v58l-18 9L34 56 20 67l-7-4V37l7-4 14 11zM68 32L50 50l18 18z" fill="#3d8fe0" />
    </Art>
  ),
  terminal: (
    <Art>
      <Squircle fill="#9a9a9a" />
      <rect x="2" y="2" width="96" height="92" rx="20" fill="#050505" />
      <rect x="9" y="9" width="82" height="80" rx="12" fill="#262626" />
      <path d="M17 20l9 7-9 7" stroke="#fff" strokeWidth="3" fill="none" />
      <rect x="27" y="36" width="11" height="4" fill="#fff" />
    </Art>
  ),
  chromedev: (
    <Art>
      <Squircle fill="#f4f4f4" />
      <ChromeBall cx={50} cy={52} r={44} />
      <path d="M8 0h38L0 48V10z" fill="#b0568e" />
      <text x="16" y="26" transform="rotate(-52 16 26)" fontFamily="Inter, sans-serif" fontWeight="700" fontSize="17" fill="#fff">DEV</text>
    </Art>
  ),
  skype: (
    <Art>
      <circle cx="34" cy="30" r="32" fill="#4a9be8" />
      <circle cx="68" cy="70" r="32" fill="#3d84dc" />
      <circle cx="50" cy="50" r="42" fill="#4a9be8" />
      <text x="50" y="74" textAnchor="middle" fontFamily="'Liberation Sans', sans-serif" fontWeight="700" fontSize="68" fill="#fff">S</text>
    </Art>
  ),
  file: (
    <Art size={92}>
      <rect x="22" y="5" width="62" height="88" rx="4" fill="#7dbcef" />
      <path d="M16 0h46l16 22v78H16z" fill="#f6f6f6" />
      <path d="M62 0l16 22H62z" fill="#d8d8d8" />
    </Art>
  ),
  thumbA: (
    <Art size={100}>
      <rect y="16" width="90" height="14" fill="#2d4a35" />
      <rect y="30" width="90" height="54" fill="#f6f6f6" />
      <rect x="10" y="50" width="26" height="22" fill="#d7e6db" />
      <rect x="50" y="50" width="26" height="22" fill="#d7e6db" />
      <ChromeBall cx={74} cy={80} r={17} />
    </Art>
  ),
  thumbB: (
    <Art size={100}>
      <rect y="16" width="90" height="14" fill="#8a7a45" />
      <rect y="30" width="90" height="54" fill="#3c3c3c" />
      <rect x="16" y="38" width="58" height="40" fill="#7d7d7d" />
      <ChromeBall cx={74} cy={80} r={17} />
    </Art>
  ),
  trash: (
    <Art size={96}>
      <path d="M20 18h60l-7 74c0 4-46 4-46 0z" fill="#75787c" />
      <path d="M30 18l8 74M50 18v74M70 18l-8 74" stroke="#5c5f63" strokeWidth="2" />
      <path d="M22 18L34 0l8 12L50 0l8 12 10-12 12 18z" fill="#dcdcdc" />
    </Art>
  ),
};

const dockLeft = [
  { id: 'finder', on: true }, { id: 'launchpad' }, { id: 'filezilla', on: true }, { id: 'safari' },
  { id: 'messages' }, { id: 'mail' }, { id: 'maps' }, { id: 'photos' }, { id: 'facetime' },
  { id: 'calendar' }, { id: 'contacts' }, { id: 'reminders' }, { id: 'notes', on: true }, { id: 'tv' },
  { id: 'music' }, { id: 'podcasts' }, { id: 'appstore' }, { id: 'settings' },
];
const dockRunning = ['mongo', 'vscode', 'terminal', 'chromedev', 'skype'];
const dockRight = ['file', 'thumbA', 'thumbB', 'trash'];

const collections = [
  'addresses', 'admins', 'business', 'claims', 'connections', 'consumers', 'incomes', 'kyc', 'limit-requests',
  'notifications', 'products', 'rents', 'rewards', 'routes', 'royalities', 'sources', 'tds', 'transactions', 'users', 'verification',
];

const userRows: Record<number, string[]> = {
  18: ["ObjectId('6646f031291a606…", '"ntl1423069"', '"Mr."', '"Royality-2"', '"$2b$10$5doebHx9eUenGRr9g…', 'null', '"royality"'],
  19: ["ObjectId('6646f5bf291a606…", '"ntl1050660"', '"Mr."', '"royality2"', '"$2b$10$9Op9VQ1hbXYwI9sCd…', 'null', '"royality"'],
};

const red = '#a63a22';
const green = '#3d7a45';
const cellTones = [red, green, green, green, green, '#5c6c75', green];

const tabs = [
  { label: 'New Tab', icon: <FaChrome size={28} color="#c9c4d4" />, divider: true },
  { label: 'Google Password Manager', icon: <KeyIcon /> },
  { label: 'Payment account - Admin Console', icon: <HexLogo size={28} />, active: true },
  { label: 'New Tab', icon: <FaChrome size={28} color="#c9c4d4" />, divider: true },
  { label: 'New Tab', icon: <FaChrome size={28} color="#c9c4d4" />, divider: true },
];

const navRows = [
  { label: 'Apps', arrow: 'r', icon: <MdMoreHoriz size={46} /> },
  { label: 'Security', arrow: 'r', icon: <ShieldIcon /> },
  { label: 'Reporting', arrow: 'r', icon: <MdBarChart size={44} /> },
  { label: 'Billing', arrow: 'd', icon: <MdWebAsset size={46} /> },
  { label: 'Subscriptions' },
  { label: 'Payment accounts', active: true },
  { label: 'Get more services' },
  { label: 'Licence settings' },
  { label: 'Account', arrow: 'r', icon: <MdAlternateEmail size={44} /> },
  { label: 'Rules', icon: <RulesIcon /> },
  { label: 'Storage', icon: <MdOutlineCloud size={44} /> },
];

function App() {
  return (
    <Desktop>
      <GlobalStyle />
      <Wallpaper />

      <MenuBar>
        <AppleMark><FaApple size={30} /></AppleMark>
        <MenuList>
          <MenuItem $bold>Chrome Dev</MenuItem>
          {['File', 'Edit', 'View', 'History', 'Bookmarks', 'Profiles', 'Tab', 'Window', 'Help'].map((m) => (
            <MenuItem key={m}>{m}</MenuItem>
          ))}
        </MenuList>
        <StatusArea>
          <svg width="32" height="32" viewBox="0 0 32 32"><rect x="2" y="2" width="28" height="28" rx="12" fill="none" stroke="#fff" strokeWidth="2.4" /></svg>
          <svg width="50" height="24" viewBox="0 0 50 24">
            <rect x="1" y="1" width="44" height="22" rx="6" fill="none" stroke="#b9b2e0" strokeWidth="2" />
            <rect x="4" y="4" width="12" height="16" rx="3" fill="#fff" />
            <rect x="47" y="8" width="3" height="8" rx="1.5" fill="#b9b2e0" />
          </svg>
          <MdWifi size={36} />
          <Search size={27} strokeWidth={2.6} />
          <svg width="28" height="30" viewBox="0 0 28 30">
            <rect x="1" y="1" width="26" height="12" rx="6" fill="none" stroke="#fff" strokeWidth="2" />
            <circle cx="8" cy="7" r="4" fill="#fff" />
            <rect x="0" y="16" width="28" height="14" rx="7" fill="#fff" />
            <circle cx="21" cy="23" r="4" fill="#2b0ea2" />
          </svg>
          <svg width="28" height="28" viewBox="0 0 28 28">
            <circle cx="14" cy="14" r="14" fill="#3c6f7a" />
            <circle cx="11" cy="14" r="8" fill="#b95bd0" opacity="0.8" />
            <circle cx="18" cy="10" r="6" fill="#4fd1c5" opacity="0.8" />
            <circle cx="14" cy="18" r="4" fill="#fff" opacity="0.7" />
          </svg>
          <StatusTime>Fri 17 May  6:24 PM</StatusTime>
        </StatusArea>
      </MenuBar>

      <CompassWindow>
        <CompassTitle>
          <GreyLight /><GreyLight /><GreyLight />
        </CompassTitle>
        <CompassBody>
          <CompassSidebar>
            <ClusterHeader>
              <Leaf />
              <span>cluster0</span>
            </ClusterHeader>
            <SideNav>
              <SideLink><SideIcon><Braces size={26} strokeWidth={2.6} /></SideIcon>My Queries</SideLink>
              <SideLink><SideIcon><Gauge /></SideIcon>Performance</SideLink>
              <SideLink><SideIcon><FaDatabase size={24} /></SideIcon>Databases</SideLink>
            </SideNav>
            <SearchBox>Search</SearchBox>
            {collections.map((c) => (
              <CollectionRow key={c} $active={c === 'users'}>
                {c === 'users' && <ActiveMarker />}
                <MdFolder size={31} />
                <span>{c}</span>
                {c === 'users' && <RowDots><MdMoreHoriz size={34} /></RowDots>}
              </CollectionRow>
            ))}
            <DatabaseRow>
              <MdArrowRight size={38} style={{ margin: '0 -2px 0 -8px' }} />
              <FaDatabase size={24} />
              xicom
            </DatabaseRow>
          </CompassSidebar>

          <CompassMain>
            <MainTabs />
            <MainHeading />
            <QueryBar>
              <QueryInput />
              <OptionsLink>Options<MdArrowRight size={34} /></OptionsLink>
            </QueryBar>
            <ViewBar>
              <ViewButton><ListGlyph /></ViewButton>
              <ViewDivider />
              <ViewButton><Braces size={36} strokeWidth={2.4} /></ViewButton>
              <ViewButton $active><GridGlyph /></ViewButton>
            </ViewBar>
            <TableBlock>
              <TableHead />
              {Array.from({ length: 19 }, (_, i) => i + 1).map((n) => {
                const cells = userRows[n] || ['', '', '', '', '', '', ''];
                return (
                  <TableRow key={n}>
                    <NumberCell>{n}</NumberCell>
                    {cells.map((text, i) => (
                      <Cell key={i} $tone={cellTones[i]}>{text}</Cell>
                    ))}
                    <ActionCell>
                      <MdEdit size={30} />
                      <CopyDoc />
                      <CloneDoc />
                      <MdDelete size={30} />
                    </ActionCell>
                  </TableRow>
                );
              })}
            </TableBlock>
            <HorizontalBar />
          </CompassMain>
        </CompassBody>
        <ShellBar>
          <ShellLabel>&gt;_MONGOSH</ShellLabel>
          <ChevronUp size={30} color="#8a99a5" />
        </ShellBar>
      </CompassWindow>

      <ChromeWindow>
        <ChromeClip>
          <TabStrip>
            <Lights>
              <Light $c="#e9645a" />
              <Light $c="#f1bc3a" />
              <Light $c="#6cc04a" />
            </Lights>
            {tabs.map((t, i) => (
              <Tab key={i} $active={t.active} $divider={t.divider}>
                <TabFavicon>{t.icon}</TabFavicon>
                <TabLabel>{t.label}</TabLabel>
                <X size={24} strokeWidth={2.4} style={{ marginLeft: 12 }} />
              </Tab>
            ))}
            <NewTabButton><Plus size={30} strokeWidth={2.4} /></NewTabButton>
            <TabMenuButton><ChevronDown size={28} strokeWidth={3} /></TabMenuButton>
          </TabStrip>

          <Toolbar>
            <NavIcon><MdArrowBack size={36} /></NavIcon>
            <NavIcon $dim><MdArrowForward size={36} /></NavIcon>
            <NavIcon><MdRefresh size={38} /></NavIcon>
            <Omnibox>
              <SiteInfo><SiteTune /></SiteInfo>
              <span>admin.google.com/u/0/ac/billing/accounts/vu7oHMb2E-7nnXWv3QrQUg?snip=x</span>
              <OmniActions>
                <MdWebAsset size={38} />
                <MdStarBorder size={38} />
              </OmniActions>
            </Omnibox>
            <ToolActions>
              <MdOutlineScience size={36} />
              <MdOutlineQueueMusic size={36} />
              <AvatarDot>
                <svg width="30" height="12" viewBox="0 0 30 12"><path d="M1 9l4-7 3 6 3-5" stroke="#3d8b5a" strokeWidth="2" fill="none" /><path d="M14 3h14M14 7h10" stroke="#333" strokeWidth="1.6" /></svg>
              </AvatarDot>
              <MdMoreVert size={38} />
            </ToolActions>
          </Toolbar>

          <PageArea>
            <AdminHeader>
              <MdMenu size={42} />
              <LogoSlot><HexLogo size={56} /></LogoSlot>
              <AdminWordmark>Admin</AdminWordmark>
              <HeaderRight>
                <HeaderIcon $lit><MdSearch size={46} /></HeaderIcon>
                <HeaderIcon><MdNotificationsNone size={46} /></HeaderIcon>
                <HeaderIcon><MdHourglassEmpty size={46} /></HeaderIcon>
                <HeaderIcon><MdHelpOutline size={46} /></HeaderIcon>
                <HeaderIcon><MdApps size={46} /></HeaderIcon>
                <HeaderIcon>
                  <svg width="56" height="16" viewBox="0 0 56 16"><path d="M2 12l7-9 4 9 5-6" stroke="#3d8b5a" strokeWidth="2.5" fill="none" /><path d="M24 5h30M24 11h20" stroke="#555" strokeWidth="2" /></svg>
                </HeaderIcon>
              </HeaderRight>
            </AdminHeader>

            <PageBody>
              <AdminNav>
                <NavList>
                  {navRows.map((r) => (
                    <NavRow key={r.label} $active={r.active}>
                      <NavArrow>
                        {r.arrow === 'r' && <MdArrowRight size={40} style={{ flex: 'none' }} />}
                        {r.arrow === 'd' && <MdArrowDropDown size={40} style={{ flex: 'none' }} />}
                      </NavArrow>
                      <NavGlyph>{r.icon}</NavGlyph>
                      {r.label}
                    </NavRow>
                  ))}
                </NavList>
                <ShowLess>Show less</ShowLess>
                <NavRule />
                <FeedbackRow>
                  <NavGlyph><MdOutlineFeedback size={44} /></NavGlyph>
                  Send feedback
                </FeedbackRow>
                <LegalText>
                  © 2024 Google Inc.
                  <br />
                  <LinkText>Terms of service</LinkText> - <LinkText>Billing terms</LinkText> -
                  <br />
                  <LinkText>Privacy Policy</LinkText>
                </LegalText>
              </AdminNav>
              <ScrollThumb $top={306} />

              <MainColumn>
                <Breadcrumb>
                  <span>Payment accounts</span>
                  <span>›</span>
                  <CrumbCurrent>7780-3412-8842</CrumbCurrent>
                </Breadcrumb>
                <ContentRow>
                  <Content>
                    <AlertBar>
                      <MdWarning size={66} />
                      <AlertText>There is a problem with your payment account</AlertText>
                      <AlertChevron><MdExpandMore size={60} /></AlertChevron>
                    </AlertBar>

                    <BalanceCard>
                      <BalanceTop>
                        <span>Your balance</span>
                        <BalanceAmount>₹27,606.51</BalanceAmount>
                      </BalanceTop>
                      <InfoRow>
                        <InfoIcon><MdCreditCard size={46} /></InfoIcon>
                        <InfoLines>
                          <span>Monthly payment via Mastercard •••• 8842<Chip /></span>
                          <span>Your payment for <b>₹14,698.08</b> is past due. Pay now to keep your service running.</span>
                        </InfoLines>
                      </InfoRow>
                      <InfoRow $gap={78}>
                        <InfoIcon><MdEvent size={46} /></InfoIcon>
                        <InfoLines>
                          <span>Your last payment was on 3 Apr for ₹3,962.98 (manual payment).</span>
                        </InfoLines>
                      </InfoRow>
                      <PayStrip>Pay ₹14,698.08 now</PayStrip>
                    </BalanceCard>

                    <CardsRow>
                      <LowerCard>
                        <CardTitle>Transactions</CardTitle>
                        <TxnList>
                          <TxnRow>
                            <LinkText>1–17 May 2024</LinkText>
                            <TxnAmount>₹27,606.51</TxnAmount>
                            <TxnDownload />
                          </TxnRow>
                          <TxnRow>
                            <LinkText>1–30 Apr 2024</LinkText>
                            <TxnAmount>₹14,698.08</TxnAmount>
                            <TxnDownload><MdFileDownload size={34} /></TxnDownload>
                          </TxnRow>
                          <TxnRow>
                            <LinkText>1–31 Mar 2024</LinkText>
                            <TxnAmount>₹3,453.22</TxnAmount>
                            <TxnDownload><MdFileDownload size={34} /></TxnDownload>
                          </TxnRow>
                        </TxnList>
                      </LowerCard>
                      <LowerCard>
                        <CardTitle>How you pay</CardTitle>
                        <PayGrid>
                          <div>
                            <PayLabel>PRIMARY</PayLabel>
                            <PayMethod>
                              <CardLogo>
                                <svg width="84" height="52" viewBox="0 0 84 52">
                                  <circle cx="26" cy="26" r="25" fill="#eb001b" />
                                  <circle cx="58" cy="26" r="25" fill="#f79e1b" />
                                  <path d="M42 6.6a25 25 0 010 38.8 25 25 0 010-38.8z" fill="#ff5f00" />
                                </svg>
                              </CardLogo>
                              <MethodText>Mastercard •••• 8842</MethodText>
                            </PayMethod>
                          </div>
                          <div>
                            <PayLabel>BACKUP</PayLabel>
                            <PayMethod>
                              <DashedBox><MdAdd size={44} /></DashedBox>
                              <AddBackup>Add a backup</AddBackup>
                            </PayMethod>
                          </div>
                        </PayGrid>
                      </LowerCard>
                    </CardsRow>
                  </Content>
                  <ScrollThumb $top={47} $height={707} />
                </ContentRow>
              </MainColumn>
            </PageBody>

            <Scrim />

            <Modal>
              <ModalHeader>
                <ModalTitle>Payment confirmed</ModalTitle>
                <ModalClose><MdClose size={52} /></ModalClose>
              </ModalHeader>
              <ModalBody>
                <ModalText>Thank you for your payment of ₹27,606.51.</ModalText>
                <ModalText>It could take up to 24 hours for your payment to appear on your transactions page.</ModalText>
              </ModalBody>
              <ModalFooter>
                <PrimaryButton>Got it</PrimaryButton>
              </ModalFooter>
            </Modal>
          </PageArea>
        </ChromeClip>
      </ChromeWindow>

      <Dock>
        {dockLeft.map((d) => (
          <DockSlot key={d.id}>
            <DockArt>{dockIcons[d.id]}</DockArt>
            <RunDot $on={d.on} />
          </DockSlot>
        ))}
        <DockGap />
        {dockRunning.map((id) => (
          <DockSlot key={id}>
            <DockArt>{dockIcons[id]}</DockArt>
            <RunDot $on />
          </DockSlot>
        ))}
        <DockGap />
        {dockRight.map((id) => (
          <DockSlot key={id}>
            <DockArt>{dockIcons[id]}</DockArt>
          </DockSlot>
        ))}
      </Dock>
    </Desktop>
  );
}

export default App;
